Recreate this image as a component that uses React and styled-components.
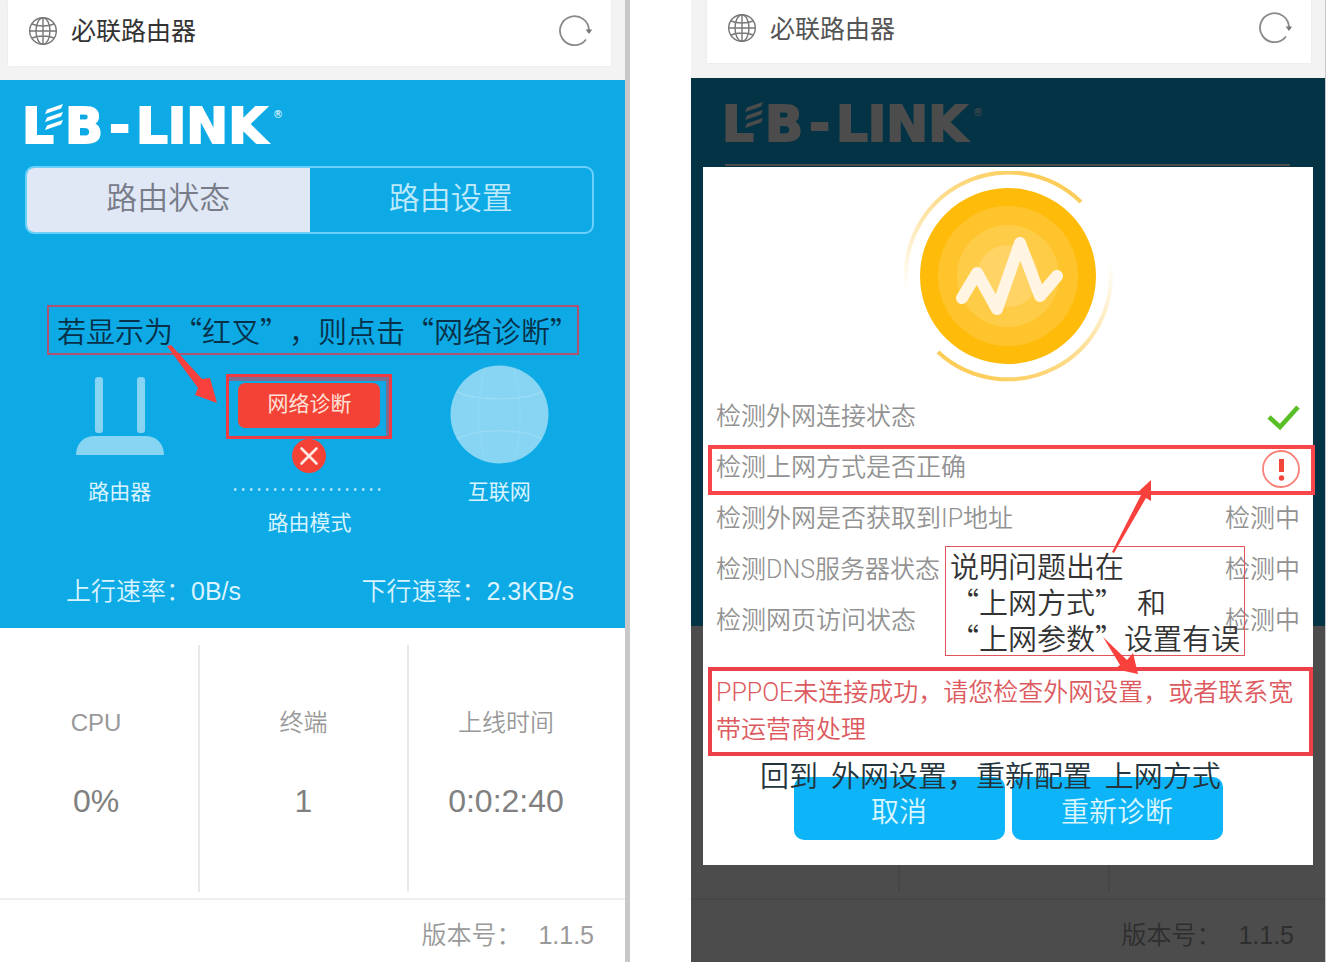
import React from 'react';
import styled, { createGlobalStyle } from 'styled-components';

const GlobalStyle = createGlobalStyle`
    * {
        box-sizing: border-box;
    }

    body {
        margin: 0;
        background: #fff;
        font-family: Roboto, 'Noto Sans CJK SC', sans-serif;
        font-weight: 350;
        text-spacing-trim: space-all;
    }

    button {
        font: inherit;
        border: 0;
        padding: 0;
        cursor: pointer;
    }

    svg {
        display: block;
    }
`;

const Page = styled.main`
    display: grid;
    grid-template-columns: 630fr 635fr;
    column-gap: 61px;
    padding-right: 3px;
    min-height: 962px;
`;

const Phone = styled.section`
    position: relative;
    display: flex;
    flex-direction: column;
    min-width: 0;
    border-right: ${({ $edge }) => $edge}px solid #c8c8c8;
`;

const BrowserBar = styled.header`
    background: #f3f3f3;
    padding: 0 14px ${({ $compact }) => ($compact ? '15px' : '14px')} ${({ $compact }) => ($compact ? '16px' : '8px')};
`;

const AddressField = styled.div`
    display: flex;
    align-items: center;
    height: ${({ $compact }) => ($compact ? '63px' : '66px')};
    padding: 0 18px ${({ $compact }) => ($compact ? '7px' : '5px')} 20px;
    background: #fff;
    box-shadow: 0 0 3px rgba(0, 0, 0, 0.06);
    color: ${({ $compact }) => ($compact ? '#555' : '#333')};
    font-size: 25px;
    font-weight: 400;
`;

const SiteName = styled.span`
    flex: 1;
    margin-left: 13px;
    padding-bottom: 3px;
`;

const IconButton = styled.button`
    background: none;
`;

const Hero = styled.div`
    min-height: 548px;
    padding: 23px 31px 19px ${({ $inset }) => ($inset ? '34px' : '25px')};
    background: #0daae6;
    color: #d9f3ff;
`;

const Logo = styled.div`
    display: flex;
    align-items: flex-end;
    gap: 6px;
    height: 42px;
    margin-left: -3px;
    color: #fff;
    font-family: 'DejaVu Sans', sans-serif;
    font-size: 50px;
    font-weight: 700;
    line-height: 37px;
    -webkit-text-stroke: 2px #fff;
`;

const LogoInitial = styled.span`
    position: relative;
    width: 37px;

    svg {
        position: absolute;
        left: 23px;
        top: -4px;
    }
`;

const Registered = styled.span`
    align-self: flex-start;
    font-size: 10px;
    font-weight: 400;
    line-height: 24px;
    -webkit-text-stroke: 0;
`;

const Tabs = styled.div`
    display: flex;
    height: 68px;
    margin-top: 21px;
    border: 2px solid #6bd0fa;
    border-radius: 9px;
    overflow: hidden;
`;

const Tab = styled.button`
    flex: 1;
    padding-bottom: 10px;
    font-size: 31px;
    background: ${({ $active }) => ($active ? '#e0e7f5' : 'transparent')};
    color: ${({ $active }) => ($active ? '#777c88' : '#bce9fc')};
`;

const TabsEdge = styled.div`
    height: 2px;
    margin: 21px 4px 0 0;
    background: #fff;
`;

const Note = styled.p`
    margin: 0;
    color: #1b262c;
    font-family: 'Noto Sans CJK SC', sans-serif;
    font-size: 29px;
    line-height: 36px;
    white-space: pre;
`;

const HeroNote = styled(Note)`
    margin: 71px 15px 0 22px;
    padding: 5px 8px;
    border: 2px solid #b0536f;
    color: #073049;
`;

const Devices = styled.div`
    display: grid;
    grid-template-columns: repeat(3, 1fr);
    margin-top: 10px;
    font-size: 21px;
    font-weight: 400;
    line-height: 28px;
`;

const Device = styled.div`
    display: flex;
    flex-direction: column;
    align-items: center;
    gap: 14px;
`;

const LinkState = styled.div`
    position: relative;
    display: flex;
    flex-direction: column;
    align-items: center;
    padding-top: 9px;
`;

const DiagnoseFrame = styled.div`
    padding: 6px 9px 8px;
    border: 3px solid #f23a42;
    box-shadow: inset -3px 4px 0 #7b6e91;
`;

const DiagnoseButton = styled.button`
    display: block;
    width: 142px;
    height: 45px;
    padding-bottom: 3px;
    border-radius: 7px;
    background: #f44336;
    color: #ffe1d9;
`;

const DottedLine = styled.svg`
    margin: 15px 0 18px;
`;

const LeftArrow = styled.svg`
    position: absolute;
    left: -48px;
    top: -20px;
`;

const Rates = styled.div`
    display: flex;
    justify-content: space-between;
    margin-top: 36px;
    padding: 0 20px 0 41px;
    font-family: 'Liberation Sans', 'Noto Sans CJK SC', sans-serif;
    font-size: 25px;
    line-height: 36px;
`;

const Stats = styled.dl`
    flex: 1;
    display: grid;
    grid-template-columns: 200fr 209fr 216fr;
    margin: 0;
    padding: 17px 0 6px;
    border-bottom: 2px solid #efefef;
    font-family: 'Liberation Sans', 'Noto Sans CJK SC', sans-serif;
    text-align: center;
`;

const Stat = styled.div`
    padding-top: 60px;
    border-right: 2px solid #e9e9e9;

    &:first-child {
        padding-right: 6px;
    }

    &:last-child {
        padding-right: 22px;
        border-right: 0;
    }

    dt {
        color: #999;
        font-size: 24px;
        line-height: 36px;
    }

    dd {
        margin: 42px 0 0;
        color: #808080;
        font-size: 32px;
        line-height: 36px;
    }
`;

const Footer = styled.footer`
    display: flex;
    justify-content: flex-end;
    gap: 17px;
    padding: 17px 31px 9px;
    color: #999;
    font-family: 'Liberation Sans', 'Noto Sans CJK SC', sans-serif;
    font-size: 25px;
    line-height: 36px;
`;

const DimmedPage = styled.div`
    position: relative;
    flex: 1;
    display: flex;
    flex-direction: column;

    &::after {
        content: '';
        position: absolute;
        inset: 0;
        background: rgba(0, 0, 0, 0.7);
    }
`;

const EmptyStats = styled.div`
    flex: 1;
    display: grid;
    grid-template-columns: 207fr 210fr 217fr;
    padding: 17px 0 6px;
    border-bottom: 2px solid #efefef;

    div + div {
        border-left: 2px solid #e9e9e9;
    }
`;

const Dialog = styled.div`
    position: absolute;
    top: 167px;
    left: 12px;
    right: 12px;
    padding: 4px 0 25px;
    background: #fff;
`;

const Pulse = styled.svg`
    margin: 0 auto 7px;
`;

const Checks = styled.ul`
    position: relative;
    margin: 0;
    padding: 0;
    list-style: none;
    color: #929292;
    font-size: 25px;
`;

const Check = styled.li`
    position: relative;
    display: flex;
    align-items: center;
    justify-content: space-between;
    height: 51px;
    padding: 0 13px;
`;

const CheckText = styled.span`
    padding-bottom: 4px;
`;

const RowMark = styled.span`
    position: absolute;
    inset: 4px -2px -3px 5px;
    border: 4px solid #f8464b;
`;

const CauseNote = styled(Note)`
    position: absolute;
    left: 242px;
    top: 156px;
    padding: 0 4px;
    border: 1px solid #e0555c;
    color: #333;
`;

const CauseArrows = styled.svg`
    position: absolute;
    left: 396px;
    top: 86px;
`;

const ErrorBox = styled.p`
    margin: 22px 0 0 5px;
    padding: 3px 4px 4px;
    border: 4px solid #ee4049;
    color: #dc5a5e;
    font-size: 25px;
    line-height: 37px;
`;

const Actions = styled.div`
    position: relative;
    display: flex;
    justify-content: center;
    gap: 7px;
    margin-top: 21px;
`;

const ActionButton = styled.button`
    width: 211px;
    height: 63px;
    padding-top: 3px;
    border-radius: 10px;
    background: #0db5f8;
    color: #d9f5ff;
    font-size: 28px;
`;

const ActionNote = styled(Note)`
    position: absolute;
    left: 57px;
    top: -21px;
    color: #23343c;
    pointer-events: none;
`;

const GlobeIcon = () => (
    <svg width="30" height="30" viewBox="0 0 30 30" fill="none" stroke="#777" strokeWidth="1.4" aria-hidden="true">
        <circle cx="15" cy="15" r="13.3" />
        <ellipse cx="15" cy="15" rx="7" ry="13.3" />
        <path d="M15 1.7v26.6M1.7 15h26.6M4 8c6 2.6 16 2.6 22 0M4 22c6-2.6 16-2.6 22 0" />
    </svg>
);

const ReloadIcon = () => (
    <svg width="36" height="34" viewBox="0 0 36 34" fill="none" aria-hidden="true">
        <path d="M29 25.500A14.500 14.500 0 1 1 32 17" stroke="#8a8a8a" strokeWidth="1.8" />
        <path d="M28.6 15.500h6.6L32 20z" fill="#777" />
    </svg>
);

const RouterIcon = () => (
    <svg width="90" height="99" viewBox="0 0 90 99" fill="#87d5f3" aria-hidden="true">
        <rect x="20" y="12" width="8" height="56" rx="3" />
        <rect x="62" y="12" width="8" height="56" rx="3" />
        <path d="M1 90C1 79 8 71 20 71h50c12 0 19 8 19 19z" />
    </svg>
);

const InternetIcon = () => (
    <svg width="99" height="99" viewBox="0 0 99 99" fill="none" aria-hidden="true">
        <circle cx="49.500" cy="49.500" r="49" fill="#87d5f3" />
        <g stroke="#98dbf5" strokeWidth="1.5">
            <path d="M7 27c20 9 65 9 85 0M7 74c20-11 65-11 85 0" />
            <path d="M35 3c-8 28-8 65 0 93M64 3c8 28 8 65 0 93" opacity="0.5" />
        </g>
    </svg>
);

const FailedIcon = () => (
    <svg width="34" height="34" viewBox="0 0 34 34" aria-hidden="true">
        <circle cx="17" cy="17" r="17" fill="#f44336" />
        <path d="M9.500 9.500l15 15M24.500 9.500l-15 15" stroke="#ffe9e5" strokeWidth="2.600" strokeLinecap="round" />
    </svg>
);

const PassedIcon = () => (
    <svg width="34" height="32" viewBox="0 0 34 32" fill="none" role="img" aria-label="正常">
        <path d="M3 17l11 10L32 7" stroke="#58bf26" strokeWidth="4.600" />
    </svg>
);

const AlertIcon = () => (
    <svg width="38" height="42" viewBox="0 0 38 42" fill="none" role="img" aria-label="异常">
        <circle cx="19" cy="23" r="18" stroke="#f98078" strokeWidth="1.8" />
        <path d="M19.500 13v13" stroke="#f4453b" strokeWidth="5" />
        <circle cx="19.500" cy="32" r="2.700" fill="#f4453b" />
    </svg>
);

const PulseIcon = () => (
    <Pulse width="212" height="212" viewBox="0 0 212 212" fill="none" aria-hidden="true">
        <defs>
            <linearGradient id="arcTop" x1="1" y1="0" x2="0" y2="1">
                <stop offset="0" stopColor="#fbc848" />
                <stop offset="0.5" stopColor="#fddc8c" />
                <stop offset="1" stopColor="#fff" />
            </linearGradient>
            <linearGradient id="arcBottom" x1="0" y1="1" x2="1" y2="0">
                <stop offset="0" stopColor="#fbc848" />
                <stop offset="0.5" stopColor="#fddc8c" />
                <stop offset="1" stopColor="#fff" />
            </linearGradient>
        </defs>
        <path d="M179 31A103 103 0 0 0 5 120" stroke="url(#arcTop)" strokeWidth="4" />
        <path d="M36 181A103 103 0 0 0 208 92" stroke="url(#arcBottom)" strokeWidth="4" />
        <circle cx="106" cy="105" r="88" fill="#ffbb0a" />
        <circle cx="106" cy="105" r="70" fill="#ffc42c" />
        <circle cx="106" cy="105" r="51" fill="#ffcc47" />
        <circle cx="106" cy="105" r="31" fill="#ffd364" />
        <path
            d="M60 127L75 102L95 138L118 72L138 125L155 105"
            stroke="#fff5e2"
            strokeWidth="12"
            strokeLinecap="round"
            strokeLinejoin="round"
        />
    </Pulse>
);

const Brand = () => (
    <Logo>
        <LogoInitial>
            L
            <svg width="18" height="28" viewBox="0 0 18 28" aria-hidden="true">
                <path d="M0 10L2 5.500L18 0L16 4.500ZM0 18L2 13.500L18 8L16 12.500ZM0 26L2 21.500L18 16L16 20.500Z" fill="#fff" />
            </svg>
        </LogoInitial>
        <span>B</span>
        <span>-</span>
        <span>LINK</span>
        <Registered>®</Registered>
    </Logo>
);

const AddressBar = ({ compact }) => (
    <BrowserBar $compact={compact}>
        <AddressField $compact={compact}>
            <GlobeIcon />
            <SiteName>必联路由器</SiteName>
            <IconButton type="button" aria-label="刷新">
                <ReloadIcon />
            </IconButton>
        </AddressField>
    </BrowserBar>
);

const Version = () => (
    <Footer>
        <span>版本号：</span>
        <span>1.1.5</span>
    </Footer>
);

const stats = [
    { label: 'CPU', value: '0%' },
    { label: '终端', value: '1' },
    { label: '上线时间', value: '0:0:2:40' },
];

const checks = [
    { label: '检测外网连接状态', state: 'passed' },
    { label: '检测上网方式是否正确', state: 'failed' },
    { label: '检测外网是否获取到IP地址' },
    { label: '检测DNS服务器状态' },
    { label: '检测网页访问状态' },
];

function StatusScreen() {
    return (
        <Phone $edge={5}>
            <AddressBar />
            <Hero>
                <Brand />
                <Tabs>
                    <Tab type="button" $active>
                        路由状态
                    </Tab>
                    <Tab type="button">路由设置</Tab>
                </Tabs>
                <HeroNote>若显示为“红叉”，则点击“网络诊断”</HeroNote>
                <Devices>
                    <Device>
                        <RouterIcon />
                        <span>路由器</span>
                    </Device>
                    <LinkState>
                        <DiagnoseFrame>
                            <DiagnoseButton type="button">网络诊断</DiagnoseButton>
                        </DiagnoseFrame>
                        <FailedIcon />
                        <DottedLine width="152" height="3" aria-hidden="true">
                            <path d="M1 1.500H152" stroke="#b5e6fa" strokeWidth="2.500" strokeDasharray="2.500 5.500" />
                        </DottedLine>
                        <span>路由模式</span>
                        <LeftArrow width="52" height="60" viewBox="0 0 52 60" fill="#f8403c" aria-hidden="true">
                            <path d="M0 1L4 0L35 34L43 33L50 58L28 50L31 43Z" />
                        </LeftArrow>
                    </LinkState>
                    <Device>
                        <InternetIcon />
                        <span>互联网</span>
                    </Device>
                </Devices>
                <Rates>
                    <span>上行速率：0B/s</span>
                    <span>下行速率：2.3KB/s</span>
                </Rates>
            </Hero>
            <Stats>
                {stats.map((stat) => (
                    <Stat key={stat.label}>
                        <dt>{stat.label}</dt>
                        <dd>{stat.value}</dd>
                    </Stat>
                ))}
            </Stats>
            <Version />
        </Phone>
    );
}

function CheckState({ state }) {
    if (state === 'passed') return <PassedIcon />;
    if (state === 'failed') return <AlertIcon />;
    return <CheckText>检测中</CheckText>;
}

function DiagnosisScreen() {
    return (
        <Phone $edge={1}>
            <AddressBar compact />
            <DimmedPage>
                <Hero $inset>
                    <Brand />
                    <TabsEdge />
                </Hero>
                <EmptyStats>
                    <div />
                    <div />
                    <div />
                </EmptyStats>
                <Version />
            </DimmedPage>
            <Dialog role="dialog" aria-label="网络诊断">
                <PulseIcon />
                <Checks>
                    {checks.map((check) => (
                        <Check key={check.label}>
                            <CheckText>{check.label}</CheckText>
                            <CheckState state={check.state} />
                            {check.state === 'failed' && <RowMark />}
                        </Check>
                    ))}
                    <CauseNote as="li">{'说明问题出在\n“上网方式”  和\n“上网参数”设置有误'}</CauseNote>
                </Checks>
                <ErrorBox>PPPOE未连接成功，请您检查外网设置，或者联系宽带运营商处理</ErrorBox>
                <Actions>
                    <ActionButton type="button">取消</ActionButton>
                    <ActionButton type="button">重新诊断</ActionButton>
                    <ActionNote>{'回到  外网设置，重新配置  上网方式'}</ActionNote>
                </Actions>
                <CauseArrows width="60" height="430" viewBox="0 0 60 430" fill="#f8403c" aria-hidden="true">
                    <path d="M15 300L13 299L42 242L38 240L52 227L52 248L47 245Z" />
                    <path d="M4 384L28 407L34 400L39 421L16 416L21 412Z" />
                </CauseArrows>
            </Dialog>
        </Phone>
    );
}

export default function App() {
    return (
        <Page>
            <GlobalStyle />
            <StatusScreen />
            <DiagnosisScreen />
        </Page>
    );
}
